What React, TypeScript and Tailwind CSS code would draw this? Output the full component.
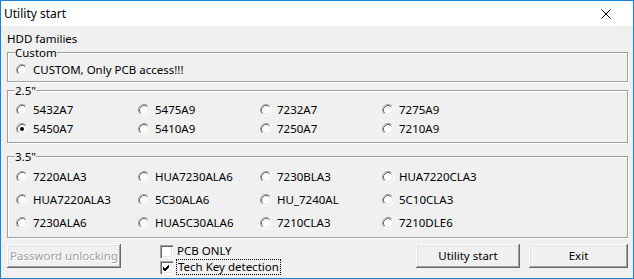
import React from "react";

const font = "font-['Noto_Sans',sans-serif]";

function Radio({ checked }: { checked?: boolean }) {
  return (
    <svg width="12" height="12" viewBox="0 0 12 12" className="shrink-0">
      <circle cx="6" cy="6" r="5" fill="#fff" />
      <path d="M2.11 9.89 A5.5 5.5 0 0 1 9.89 2.11" stroke="#a0a0a0" fill="none" />
      <path d="M9.89 2.11 A5.5 5.5 0 0 1 2.11 9.89" stroke="#fff" fill="none" />
      <path d="M2.82 9.18 A4.5 4.5 0 0 1 9.18 2.82" stroke="#696969" fill="none" />
      <path d="M9.18 2.82 A4.5 4.5 0 0 1 2.82 9.18" stroke="#e3e3e3" fill="none" />
      {checked && <circle cx="6" cy="6" r="2" fill="#000" />}
    </svg>
  );
}

function Check({ checked }: { checked?: boolean }) {
  return (
    <span className="w-[13px] h-[13px] shrink-0 bg-white shadow-[inset_1px_1px_#a0a0a0,inset_2px_2px_#696969,inset_-1px_-1px_#fff,inset_-2px_-2px_#e3e3e3] flex items-center justify-center">
      {checked && (
        <svg width="9" height="9" viewBox="0 0 9 9">
          <path d="M1 4 L3 6 L7 2 M1 5 L3 7 L7 3 M1 6 L3 8 L7 4" stroke="#000" fill="none" strokeWidth="1" />
        </svg>
      )}
    </span>
  );
}

function Option({ label, checked }: { label: string; checked?: boolean }) {
  return (
    <div className="flex items-center gap-[5px] h-[14px] leading-[14px] whitespace-nowrap">
      <Radio checked={checked} />
      <span>{label}</span>
    </div>
  );
}

function Group({ label, className, children }: { label: string; className: string; children: React.ReactNode }) {
  return (
    <div className={"relative border border-[#a0a0a0] shadow-[inset_1px_1px_#fff,1px_1px_#fff] " + className}>
      <span className="absolute left-[7px] top-[-7px] bg-[#f0f0f0] leading-[13px]">{label}</span>
      {children}
    </div>
  );
}

const btn =
  "h-[24px] flex items-center justify-center whitespace-nowrap bg-[#f0f0f0] shadow-[inset_-1px_-1px_#696969,inset_1px_1px_#fff,inset_-2px_-2px_#a0a0a0,inset_2px_2px_#e3e3e3]";

export default function App() {
  const small = ["5432A7", "5475A9", "7232A7", "7275A9", "5450A7", "5410A9", "7250A7", "7210A9"];
  const big = [
    "7220ALA3", "HUA7230ALA6", "7230BLA3", "HUA7220CLA3",
    "HUA7220ALA3", "5C30ALA6", "HU_7240AL", "5C10CLA3",
    "7230ALA6", "HUA5C30ALA6", "7210CLA3", "7210DLE6",
  ];

  return (
    <div className={`w-[634px] h-[279px] border border-[#1883d7] bg-[#f0f0f0] flex flex-col text-[11.5px] text-black ${font}`}>
      <div className="h-[25px] bg-white flex items-center justify-between pl-[3px] pr-[22px] text-[12px]">
        <span className="leading-[14px]">Utility start</span>
        <svg width="10" height="10" viewBox="0 0 10 10">
          <path d="M0.5 0.5 L9.5 9.5 M9.5 0.5 L0.5 9.5" stroke="#000" strokeWidth="1" />
        </svg>
      </div>

      <div className="flex flex-col pl-[6px] pr-[5px] pt-[6px]">
        <div className="leading-[13px] h-[13px]">HDD families</div>

        <Group label="Custom" className="mt-[7px] pl-[8px] pt-[10px] pb-[4px]">
          <Option label="CUSTOM, Only PCB access!!!" />
        </Group>

        <Group label={'2.5"'} className="mt-[8px] pl-[8px] pt-[12px] pb-[6px]">
          <div className="grid grid-cols-[122px_122px_122px_122px] gap-y-[5px]">
            {small.map((s) => (
              <Option key={s} label={s} checked={s === "5450A7"} />
            ))}
          </div>
        </Group>

        <Group label={'3.5"'} className="mt-[13px] pl-[8px] pt-[13px] pb-[7px]">
          <div className="grid grid-cols-[122px_122px_122px_122px] gap-y-[9px]">
            {big.map((s) => (
              <Option key={s} label={s} />
            ))}
          </div>
        </Group>

        <div className="flex items-start">
          <div className={`${btn} mt-[6px] w-[114px] text-[#a0a0a0] [text-shadow:1px_1px_#fff]`}>Password unlocking</div>
          <div className="ml-[39px] mt-[5px] flex flex-col">
            <div className="flex items-center gap-[3px] h-[16px]">
              <Check />
              <span className="leading-[14px] px-px">PCB ONLY</span>
            </div>
            <div className="flex items-center gap-[3px] h-[16px]">
              <Check checked />
              <span className="leading-[14px] px-px border border-dotted border-black">Tech Key detection</span>
            </div>
          </div>
          <div className={`${btn} ml-auto mt-[6px] w-[104px]`}>Utility start</div>
          <div className={`${btn} ml-[9px] mt-[6px] w-[99px]`}>Exit</div>
        </div>
      </div>
    </div>
  );
}
